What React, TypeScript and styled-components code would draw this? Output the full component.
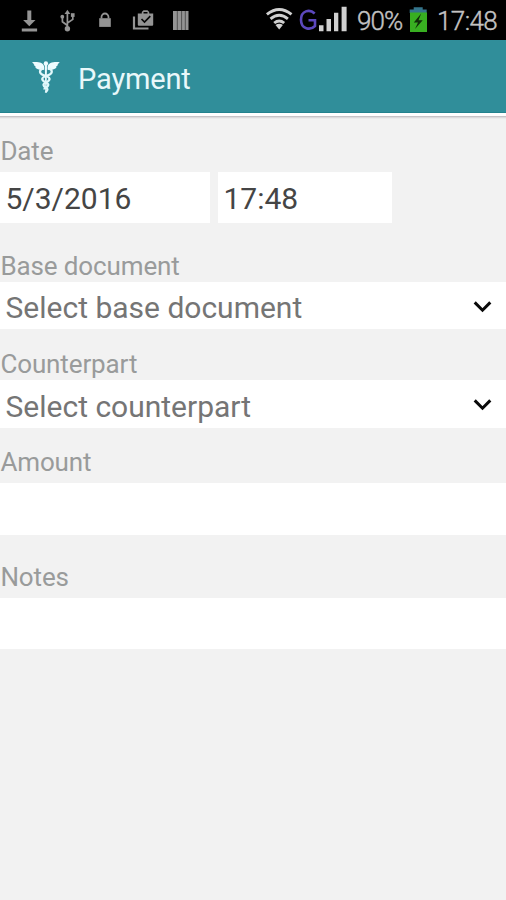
import React from "react";
import styled, { createGlobalStyle } from "styled-components";

const GlobalStyle = createGlobalStyle`
  * { box-sizing: border-box; }
  body { margin: 0; background: #f2f2f2; font-family: Roboto, sans-serif; overflow: hidden; }
`;

const Screen = styled.div`
  display: flex;
  flex-direction: column;
  width: 506px;
  height: 900px;
  background: #f2f2f2;
`;

const StatusBar = styled.header`
  display: flex;
  justify-content: space-between;
  flex: none;
  height: 40px;
  background: #000;
`;

const StatusIcons = styled.svg`
  display: block;
  flex: none;
  height: 40px;
`;

const StatusGroup = styled.div`
  display: flex;
  padding-right: 8px;
`;

const StatusText = styled.span<{ $width: number; $spacing: number }>`
  width: ${(p) => p.$width}px;
  font-size: 26px;
  line-height: 42px;
  letter-spacing: ${(p) => p.$spacing}px;
  color: #c3c3c3;
  font-weight: 300;
  -webkit-text-stroke: 0.4px #c3c3c3;
  white-space: nowrap;
`;

const TitleBar = styled.div`
  display: flex;
  align-items: center;
  flex: none;
  height: 73px;
  padding-left: 30px;
  background: #308e9a;
  border-bottom: 1px solid #23828e;
`;

const TitleIcon = styled.svg`
  flex: none;
  width: 31px;
  height: 36px;
`;

const Title = styled.h1`
  margin: 0 0 0 17px;
  font-size: 29px;
  line-height: 72px;
  padding-top: 6px;
  letter-spacing: -0.15px;
  font-weight: 400;
  color: #e9f8fa;
`;

const Divider = styled.div`
  flex: none;
  height: 6px;
  background: linear-gradient(#fff 0 3px, #c6c4c7 3px 4px, #dcdbdd 4px 5px, #ebebeb 5px);
`;

const Form = styled.main`
  display: flex;
  flex-direction: column;
`;

const Field = styled.section<{ $top: number }>`
  padding-top: ${(p) => p.$top}px;
`;

const Label = styled.label<{ $gap?: number }>`
  display: block;
  height: 32px;
  line-height: 33px;
  margin-bottom: ${(p) => p.$gap ?? 0}px;
  font-size: 26px;
  letter-spacing: -0.12px;
  padding-left: 0.4px;
  color: #999b9b;
`;

const Inputs = styled.div`
  display: flex;
  gap: 8px;
`;

const Input = styled.div<{ $width?: number; $height?: number }>`
  display: flex;
  align-items: center;
  width: ${(p) => (p.$width ? `${p.$width}px` : "100%")};
  height: ${(p) => p.$height ?? 51}px;
  padding: 2px 0 0 5.5px;
  background: #fff;
  font-size: 30px;
  color: #454545;
`;

const Select = styled.div<{ $height: number }>`
  display: flex;
  align-items: center;
  justify-content: space-between;
  height: ${(p) => p.$height}px;
  padding: 0 13px 0 5.5px;
  background: #fff;
  font-size: 30px;
  line-height: 36px;
  color: #757575;
`;

const SelectText = styled.span`
  padding-top: 5px;
`;

const Chevron = () => (
  <svg width="20" height="14" viewBox="0 0 20 14" fill="none">
    <path d="M1.700 3.400 9.500 11.200 17.300 3.400" stroke="#0a0a0a" strokeWidth="3" />
  </svg>
);

const Notifications = () => (
  <StatusIcons width="200" viewBox="0 0 200 40" fill="#949494">
    <path d="M27.3 10.5h4V20h4.2l-6.2 6.2L23.100 20h4.200zM21.800 28.600h15.300v2.800H21.800z" />
    <g stroke="#949494" strokeWidth="1.700" fill="none">
      <path d="M67.400 12.500v16M67.400 25.500l-5-3.700V16M67.400 23l5.400-3.600V15" />
    </g>
    <path d="m67.400 9.800 2.900 4.200h-5.800z" />
    <circle cx="67.400" cy="28.700" r="2.700" />
    <circle cx="62.300" cy="16.700" r="1.900" />
    <path d="M70.900 13.200h3.700v3.700h-3.700z" />
    <path d="M99.200 18.200h11.600v8.700H99.200z" />
    <path d="M101.500 18.500v-1.500a3.500 3.500 0 0 1 7 0v1.500" fill="none" stroke="#949494" strokeWidth="1.800" />
    <path d="M134 16.500v12h14.500" fill="none" stroke="#949494" strokeWidth="2.200" />
    <path d="M137.800 13.500h4v-1.600l1.700-1.700h4l1.700 1.700v1.600h4V24.700q0 1-1 1h-13.400q-1 0-1-1zm5.700 0h4v-1.600h-4z" fillRule="evenodd" />
    <path d="m141.500 19 3 3 5.800-5.800" fill="none" stroke="#080808" strokeWidth="1.700" />
    <path d="M173 11h15.500v19H173z" />
    <path d="M177.300 11v19M181.600 11v19M185.300 11v19" stroke="#3f3f3f" strokeWidth=".8" />
  </StatusIcons>
);

const Signal = () => (
  <StatusIcons width="92" viewBox="265 0 92 40">
    <g fill="none" stroke="#d0d0d0" strokeWidth="2.900">
      <path d="M266.900 14.400q12.300-10 24.600 0" />
      <path d="M270.500 18.900q8.700-7.100 17.400 0" />
      <path d="M274.200 23q5-4.100 10 0" />
    </g>
    <path d="M275.500 25q3.700-2.500 7.400 0l-3.700 4.600z" fill="#d0d0d0" />
    <path d="M314.700 13.500C309.500 8.500 301 10.800 301 19.700C301 29.500 310.500 30.500 315 26V20.300H308.500" fill="none" stroke="#5c48be" strokeWidth="2.600" />
    <path d="M319 25.300h4.500v6H319zM326.500 19h4.500v12.300h-4.500zM334 12.800h4.300v18.500H334zM341.600 6.800h5v24.500h-5z" fill="#d0d0d0" />
  </StatusIcons>
);

const Battery = () => (
  <StatusIcons width="29" viewBox="408 0 29 40">
    <path d="M413.700 7.200h9v2.300h4V13h-17V9.500h4z" fill="#34758c" />
    <path d="M410 12.500h17V32h-17z" fill="#38af21" />
    <path d="m421.200 13.500-7.400 9h4.200l-3 6.500 7.700-8.700h-4.200z" fill="#102d0a" />
  </StatusIcons>
);

const Caduceus = () => (
  <TitleIcon viewBox="30 60 31 36" fill="#eefcff">
    <path d="M44.200 69c-.5-4.600-6-5.300-12.200-4.800l2.400 2.300-.8.300 2.300 2.200-.7.500c2 1.900 5 2.900 9 2.200zM47.600 69c.5-4.600 6-5.300 12.200-4.800l-2.400 2.300.8.300-2.300 2.200.7.500c-2 1.900-5 2.900-9 2.200z" />
    <circle cx="45.900" cy="65.500" r="2.200" />
    <path d="M44.800 66h2.200l-.5 28.700h-1.200z" />
    <g fill="none" stroke="#e2f8fb" strokeWidth="2.200">
      <path d="M42.500 70.500c-4 2-3 5.500 1.500 6.700s7.300 3.300 4.200 6-6 2.200-4.300 4.800c1 1.300 3.800 1.600 3.600 3.500s-1.500 1.500-1.700 3" />
      <path d="M49.300 70.500c4 2 3 5.500-1.500 6.700s-7.300 3.300-4.200 6 6 2.200 4.300 4.800c-1 1.300-3.800 1.600-3.600 3.500" />
    </g>
  </TitleIcon>
);

export default function App() {
  return (
    <Screen>
      <GlobalStyle />
      <StatusBar>
        <Notifications />
        <StatusGroup>
          <Signal />
          <StatusText $width={51} $spacing={-0.9}>90%</StatusText>
          <Battery />
          <StatusText $width={61} $spacing={-0.6}>17:48</StatusText>
        </StatusGroup>
      </StatusBar>
      <TitleBar>
        <Caduceus />
        <Title>Payment</Title>
      </TitleBar>
      <Divider />
      <Form>
        <Field $top={16}>
          <Label $gap={5}>Date</Label>
          <Inputs>
            <Input $width={210}>5/3/2016</Input>
            <Input $width={174}>17:48</Input>
          </Inputs>
        </Field>
        <Field $top={27}>
          <Label>Base document</Label>
          <Select $height={47}>
            <SelectText>Select base document</SelectText>
            <Chevron />
          </Select>
        </Field>
        <Field $top={19}>
          <Label>Counterpart</Label>
          <Select $height={48}>
            <SelectText>Select counterpart</SelectText>
            <Chevron />
          </Select>
        </Field>
        <Field $top={18}>
          <Label $gap={5}>Amount</Label>
          <Input $height={52} />
        </Field>
        <Field $top={26}>
          <Label $gap={5}>Notes</Label>
          <Input />
        </Field>
      </Form>
    </Screen>
  );
}
